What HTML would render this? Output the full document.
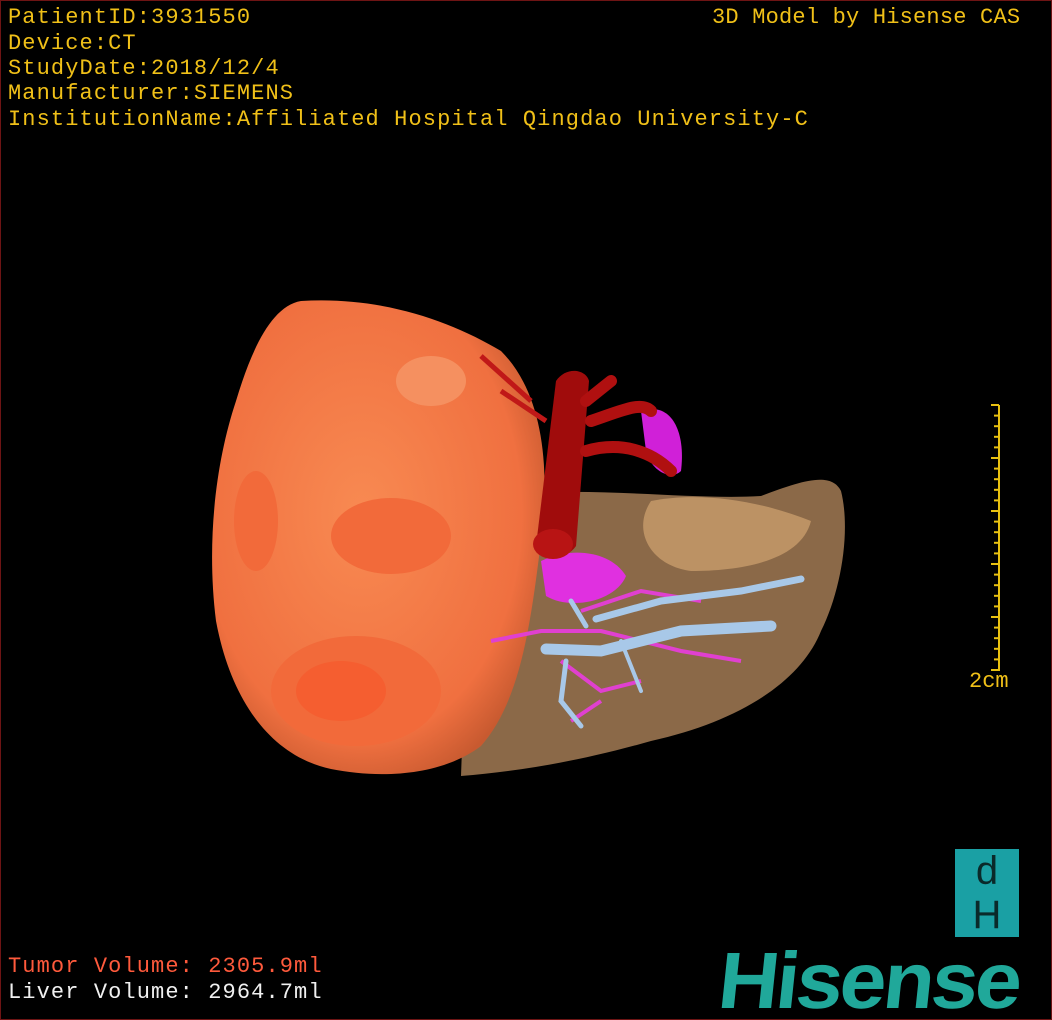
<!DOCTYPE html>
<html><head><meta charset="utf-8"><style>
html,body{margin:0;padding:0;background:#000;}
#f{position:relative;width:1050px;height:1018px;border:1px solid #6e1414;overflow:hidden;background:#000;}
.t{position:absolute;left:7px;color:#f0c018;font-size:22px;line-height:25px;white-space:pre;letter-spacing:1.1px;font-family:"Liberation Mono","Noto Sans CJK SC",monospace;}
</style></head><body><div id="f">
<svg width="1050" height="1018" style="position:absolute;left:0;top:0">
<defs>
<radialGradient id="tg" cx="0.45" cy="0.45" r="0.6"><stop offset="0" stop-color="#f88a52"/><stop offset="0.8" stop-color="#f07040"/><stop offset="1" stop-color="#c85a30"/></radialGradient>
</defs>
<path d="M470,500 C560,480 680,500 760,495 C800,480 830,470 840,490 C850,530 840,590 820,630 C800,680 740,720 650,740 C580,760 520,770 460,775 Z" fill="#9a7450" opacity="0.9"/>
<path d="M650,500 C700,490 760,500 810,520 C800,560 740,570 690,570 C650,565 630,530 650,500Z" fill="#c89c6c" opacity="0.8"/>
<path d="M300,300 C380,295 450,320 500,350 C540,390 550,460 540,540 C530,620 520,700 480,745 C440,775 380,778 330,768 C270,755 230,700 215,620 C205,540 215,460 235,400 C250,350 270,305 300,300Z" fill="url(#tg)"/>
<ellipse cx="390" cy="535" rx="60" ry="38" fill="#f26a3a"/>
<ellipse cx="355" cy="690" rx="85" ry="55" fill="#f26a3a"/>
<ellipse cx="340" cy="690" rx="45" ry="30" fill="#f55e30"/>
<ellipse cx="255" cy="520" rx="22" ry="50" fill="#f26a3a"/>
<ellipse cx="430" cy="380" rx="35" ry="25" fill="#f59060"/>
<path d="M640,410 C670,400 685,430 680,470 C670,480 650,470 645,450Z" fill="#d020d8"/>
<path d="M540,560 C570,545 610,550 625,575 C615,600 570,610 545,595Z" fill="#e030e0"/>
<g stroke="#e040d0" stroke-width="4" fill="none">
<path d="M490,640 L540,630 L600,630 L680,650 L740,660"/>
<path d="M560,660 L600,690 L640,680"/><path d="M580,610 L640,590 L700,600"/>
<path d="M600,700 L570,720"/>
</g>
<g stroke="#a8c8e8" stroke-linecap="round" fill="none">
<path d="M545,648 L600,650 L680,630 L770,625" stroke-width="11"/>
<path d="M595,618 L660,600 L740,590 L800,578" stroke-width="7"/>
<path d="M565,660 L560,700 L580,725" stroke-width="5"/>
<path d="M620,640 L640,690" stroke-width="4"/>
<path d="M570,600 L585,625" stroke-width="5"/>
</g>
<path d="M555,380 C565,365 585,368 588,380 L575,545 C565,560 540,560 535,545 Z" fill="#a00c0c"/>
<ellipse cx="552" cy="543" rx="20" ry="15" fill="#b81414"/>
<g stroke="#b01010" stroke-width="12" fill="none" stroke-linecap="round">
<path d="M585,450 C620,440 650,450 670,470"/><path d="M585,400 L610,380"/><path d="M590,420 C620,410 640,400 650,410"/>
</g>
<g stroke="#c01818" stroke-width="5" fill="none"><path d="M480,355 L530,400"/><path d="M500,390 L545,420"/></g>
<g stroke="#e8c010" stroke-width="2">
<line x1="998" y1="404" x2="998" y2="670"/>
</g>
<g stroke="#e8c010" stroke-width="2" id="ticks"></g>
</svg>
<div class="t" style="top:4px">PatientID:3931550</div>
<div class="t" style="top:30px">Device:CT</div>
<div class="t" style="top:55px">StudyDate:2018/12/4</div>
<div class="t" style="top:80px">Manufacturer:SIEMENS</div>
<div class="t" style="top:106px;letter-spacing:1.1px">InstitutionName:Affiliated Hospital Qingdao University-C</div>
<div class="t" style="top:4px;left:711px;letter-spacing:0.2px">3D Model by Hisense CAS</div>
<div class="t" style="top:668px;left:968px;letter-spacing:0">2cm</div>
<div class="t" style="top:953px;color:#ff5a3c">Tumor Volume: 2305.9ml</div>
<div class="t" style="top:979px;color:#f0f0f0">Liver Volume: 2964.7ml</div>
<div style="position:absolute;left:954px;top:848px;width:64px;height:88px;background:#1aa0a4;color:#0a2a2a;font:40px/44px 'Liberation Sans',sans-serif;text-align:center">d<br>H</div>
<div style="position:absolute;left:722px;top:942px;color:#20a89a;font:bold 80px/76px 'Liberation Sans',sans-serif;letter-spacing:-3px;transform:skewX(-6deg) scaleX(1.05);transform-origin:left top">Hisense</div>
<script>
var g=document.getElementById('ticks'),s='';
for(var i=0;i<=25;i++){var y=404+i*10.6;var l=(i%5==0)?8:5;s+='<line x1="'+(998-l)+'" y1="'+y+'" x2="998" y2="'+y+'"/>';}
g.innerHTML=s;
</script>
</div></body></html>
